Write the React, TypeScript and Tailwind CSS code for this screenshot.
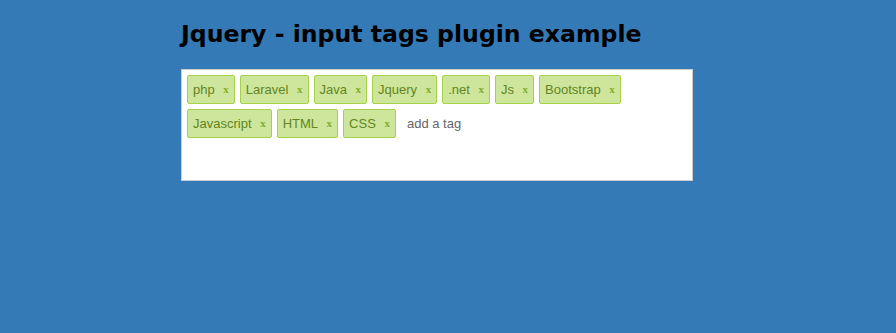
const tags = ["php", "Laravel", "Java", "Jquery", ".net", "Js", "Bootstrap", "Javascript", "HTML", "CSS"];

function Tag({ label }: { label: string }) {
  return (
    <span className="mr-[5px] mb-[5px] flex h-[29px] items-center rounded-[2px] border border-[#a5d24a] bg-[#cde69c] px-[5px] text-[13px] text-[#638421]">
      <span>{label}</span>
      <a className="ml-[8.6px] font-['Liberation_Serif',serif] text-[11px] font-bold text-[#82ad2b]">x</a>
    </span>
  );
}

export default function App() {
  return (
    <div className="min-h-[333px] w-full bg-[#337ab7] font-['Liberation_Sans',Arial,sans-serif]">
      <div className="mx-auto w-[534px] pt-[19px]">
        <h1 className="mb-[20px] font-['DejaVu_Sans',sans-serif] text-[23.6px] leading-[30px] font-bold text-black">
          Jquery - input tags plugin example
        </h1>
        <div className="flex h-[112px] w-[512px] flex-wrap content-start border border-[#cccccc] bg-white p-[5px]">
          {tags.map((t) => (
            <Tag key={t} label={t} />
          ))}
          <input
            placeholder="add a tag"
            className="mb-[5px] h-[29px] w-[80px] border border-transparent px-[5px] text-[13px] text-[#666666] outline-none placeholder:text-[#666666]"
          />
        </div>
      </div>
    </div>
  );
}
